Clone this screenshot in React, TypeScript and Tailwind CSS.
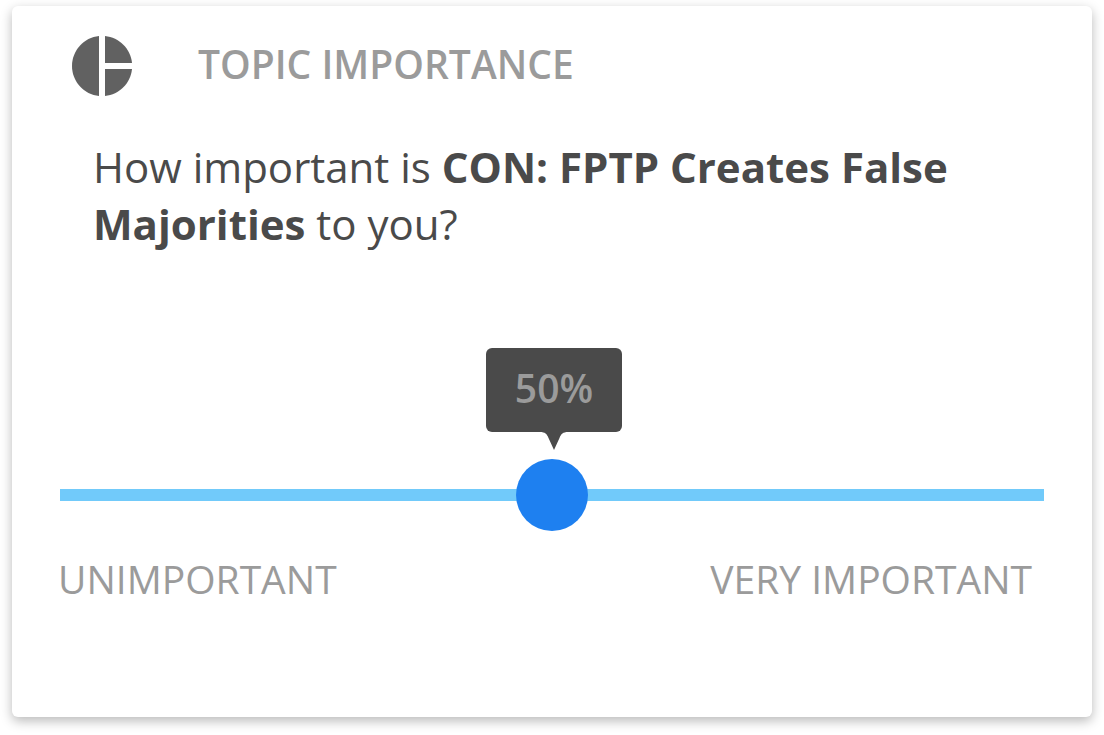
import { useState } from "react";

export default function App() {
  const [value, setValue] = useState(50);

  return (
    <main className="px-3 pt-1.5 pb-4 font-['Open_Sans',sans-serif]">
      <section className="rounded-md bg-white px-[46px] pt-[30px] pb-[110px] shadow-[0_4px_12px_rgba(0,0,0,0.28)]">
        <header className="flex items-start gap-[66px] pl-3.5">
          <svg viewBox="0 0 60 60" className="size-[60px] shrink-0 fill-[#616161]" aria-hidden="true">
            <path d="M27 0v60C12 58.500 0 45.700 0 30S12 1.500 27 0Z" />
            <path d="M33 0v27h27C58.600 12.700 47.300 1.400 33 0Z" />
            <path d="M33 33v27c14.300-1.400 25.600-12.700 27-27H33Z" />
          </svg>
          <h1 className="text-[39px] leading-[56px] font-semibold text-[#9b9b9b]">TOPIC IMPORTANCE</h1>
        </header>

        <p className="mt-[42px] px-[35px] text-[42px] leading-[57px] text-[#4a4a4a]">
          How important is <strong className="font-bold">CON: FPTP Creates False Majorities</strong> to you?
        </p>

        <div className="relative mx-0.5 mt-[207px] h-[72px]">
          <div
            className="absolute bottom-[99px] flex h-[84px] w-[136px] -translate-x-1/2 items-center justify-center rounded-md bg-[#4a4a4a] pb-1"
            style={{ left: `calc(38px + (100% - 72px) * ${value / 100})` }}
          >
            <output htmlFor="importance" className="text-[39px] font-semibold text-[#9b9b9b]">{value}%</output>
            <svg viewBox="0 0 28 18" className="absolute top-full h-[18px] w-7 fill-[#4a4a4a]" aria-hidden="true">
              <path d="M0 0h28c-5 0-7 2-8.500 6L14 18 8.500 6C7 2 5 0 0 0Z" />
            </svg>
          </div>
          <input
            id="importance"
            type="range"
            min={0}
            max={100}
            value={value}
            onChange={(event) => setValue(Number(event.target.value))}
            aria-label="Topic importance"
            className="block h-[72px] w-full cursor-pointer appearance-none bg-transparent [&::-webkit-slider-runnable-track]:h-3 [&::-webkit-slider-runnable-track]:bg-[#71cafa] [&::-webkit-slider-thumb]:-mt-[30px] [&::-webkit-slider-thumb]:size-[72px] [&::-webkit-slider-thumb]:appearance-none [&::-webkit-slider-thumb]:rounded-full [&::-webkit-slider-thumb]:bg-[#1e80f0]"
          />
        </div>

        <div className="mt-5 flex justify-between pr-3.5 text-[39px] leading-[56px] text-[#9b9b9b]">
          <span>UNIMPORTANT</span>
          <span>VERY IMPORTANT</span>
        </div>
      </section>
    </main>
  );
}
